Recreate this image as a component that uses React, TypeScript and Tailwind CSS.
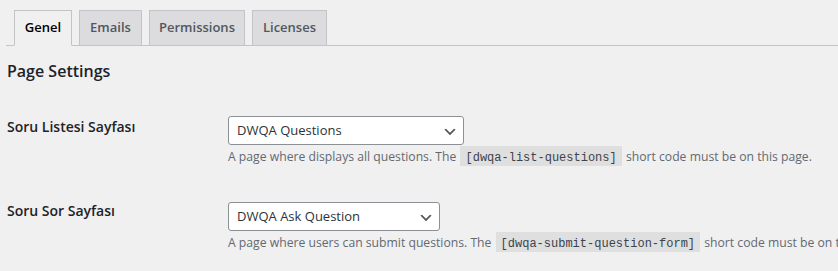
function Chevron() {
  return (
    <svg width="16" height="16" viewBox="0 0 20 20" className="absolute right-[5px] top-[7px]" aria-hidden="true">
      <path d="M5 6l5 5 5-5 2 1-7 7-7-7 2-1z" fill="#555" />
    </svg>
  );
}

function Select({ value, width }: { value: string; width: string }) {
  return (
    <div
      className={`relative h-[29px] ${width} rounded-[3px] border border-[#8c8f94] bg-white pl-[8px] text-[13px] leading-[27px] text-[#2c3338]`}
    >
      {value}
      <Chevron />
    </div>
  );
}

function Code({ children }: { children: string }) {
  return (
    <code className="mx-px inline-block h-[20px] bg-black/[0.07] px-[5px] pt-[5px] font-['Liberation_Mono',monospace] text-[12px] leading-[15px] text-[#3c434a]">
      {children}
    </code>
  );
}

function Row({
  label,
  value,
  width,
  before,
  code,
  after,
  labelClass,
}: {
  label: string;
  value: string;
  width: string;
  before: string;
  code: string;
  after: string;
  labelClass: string;
}) {
  return (
    <div className="flex">
      <div className={`w-[221px] shrink-0 text-[14px] font-semibold leading-[20px] text-[#1d2327] ${labelClass}`}>{label}</div>
      <div className="flex flex-col">
        <Select value={value} width={width} />
        <p className="whitespace-nowrap pt-px text-[12.2px] leading-[20px] text-[#646970]">
          {before}
          <Code>{code}</Code>
          {after}
        </p>
      </div>
    </div>
  );
}

export default function App() {
  const tabs = [
    { name: "Genel", w: "w-[58px]", active: true },
    { name: "Emails", w: "w-[63px]", active: false },
    { name: "Permissions", w: "w-[96px]", active: false },
    { name: "Licenses", w: "w-[75px]", active: false },
  ];
  return (
    <div className="h-[271px] w-[838px] overflow-hidden bg-[#f0f0f1] font-['Open_Sans',sans-serif] text-[#1d2327]">
      <div className="ml-[6px] box-content flex h-[36px] items-end gap-[7px] border-b border-[#c3c4c7] pl-[8px] pt-[9px]">
        {tabs.map((t) => (
          <div
            key={t.name}
            className={`-mb-px flex h-[36px] ${t.w} items-center justify-center border border-[#c3c4c7] text-[13px] font-semibold ${
              t.active ? "border-b-[#f0f0f1] bg-[#f0f0f1] text-black" : "bg-[#dcdcde] text-[#50575e]"
            }`}
          >
            {t.name}
          </div>
        ))}
      </div>
      <h2 className="ml-[7px] mt-[14px] text-[16px] font-semibold leading-[22px] text-[#1d2327]">Page Settings</h2>
      <div className="ml-[7px] mt-[34px] flex flex-col gap-[35px]">
        <Row
          label="Soru Listesi Sayfası"
          value="DWQA Questions"
          width="w-[236px]"
          before="A page where displays all questions. The "
          code="[dwqa-list-questions]"
          after=" short code must be on this page."
          labelClass="pt-px"
        />
        <Row
          label="Soru Sor Sayfası"
          value="DWQA Ask Question"
          width="w-[212px]"
          before="A page where users can submit questions. The "
          code="[dwqa-submit-question-form]"
          after=" short code must be on this page."
          labelClass="-mt-[1px]"
        />
      </div>
    </div>
  );
}
